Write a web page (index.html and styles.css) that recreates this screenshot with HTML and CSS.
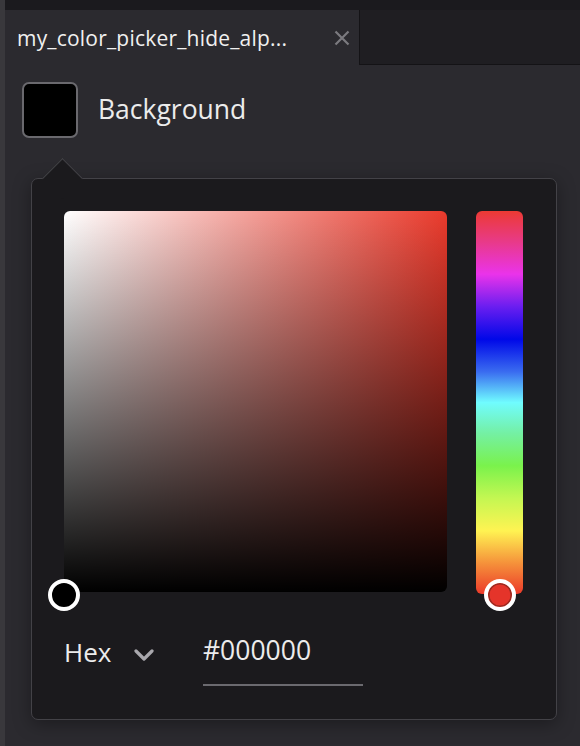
FILE: index.html
```html
<!DOCTYPE html>
<html lang="en">
<head>
	<meta charset="UTF-8">
	<title>Color picker</title>
	<link rel="stylesheet" href="styles.css">
</head>
<body>
	<div class="app">
		<div class="topStrip"></div>
		<div class="tabBar">
			<div class="tab">
				<span class="tabTitle">my_color_picker_hide_alp...</span>
				<svg class="tabClose" width="16" height="16" viewBox="0 0 16 16">
					<path d="M1.5 1.5 L14.5 14.5 M14.5 1.5 L1.5 14.5" stroke="#7b7a7f" stroke-width="2.2" fill="none"/>
				</svg>
			</div>
			<div class="tabRest"></div>
		</div>
		<div class="content">
			<div class="colorRow">
				<div class="swatch"></div>
				<span class="colorLabel">Background</span>
			</div>
			<div class="popover">
				<div class="pickerMain">
					<div class="satArea">
						<div class="satHandle"></div>
					</div>
					<div class="hueBar">
						<div class="hueHandle"></div>
					</div>
				</div>
				<div class="formatRow">
					<div class="formatSelect">
						<span class="formatName">Hex</span>
						<svg class="chevron" width="20" height="12" viewBox="0 0 20 12">
							<path d="M2 2 L10 10 L18 2" stroke="#a9a8ad" stroke-width="3.2" fill="none" stroke-linecap="round" stroke-linejoin="round"/>
						</svg>
					</div>
					<div class="hexField">#000000</div>
				</div>
			</div>
		</div>
	</div>
</body>
</html>
```

FILE: styles.css
```css
html, body {
  margin: 0;
  height: 100%;
}
body {
  background: #2b2a2f;
  font-family: "Open Sans", "Noto Sans", sans-serif;
  color: #ececec;
}
.app {
  min-height: 100%;
  border-left: 5px solid #39383c;
  box-sizing: border-box;
}
.topStrip {
  height: 10px;
  background: #1b1a1e;
}
.tabBar {
  display: flex;
  height: 55px;
}
.tab {
  width: 354px;
  display: flex;
  align-items: center;
  padding-left: 12px;
  box-sizing: border-box;
  background: #2b2a2f;
}
.tabTitle {
  font-size: 21px;
  color: #f0f0f0;
  letter-spacing: 0.2px;
  white-space: nowrap;
}
.tabClose {
  margin-left: 47px;
  flex-shrink: 0;
}
.tabRest {
  flex: 1;
  background: #1f1e22;
  border-left: 1px solid #141316;
  border-bottom: 1px solid #141316;
}
.content {
  padding: 17px 0 0 17px;
}
.colorRow {
  display: flex;
  align-items: center;
  gap: 20px;
}
.swatch {
  width: 56px;
  height: 56px;
  box-sizing: border-box;
  background: #000;
  border: 2px solid #6a696e;
  border-radius: 7px;
}
.colorLabel {
  font-size: 26.5px;
  color: #ececec;
  padding-bottom: 2px;
}
.popover {
  position: relative;
  margin: 40px 0 0 9px;
  width: 526px;
  height: 542px;
  box-sizing: border-box;
  padding: 32px 33px 0 32px;
  background: #1b1a1d;
  border: 1px solid #434247;
  border-radius: 7px;
  box-shadow: 0 4px 18px rgba(0, 0, 0, 0.35);
}
.popover:before {
  content: "";
  position: absolute;
  left: 16px;
  top: -15px;
  width: 28px;
  height: 28px;
  background: #1b1a1d;
  border-left: 1px solid #434247;
  border-top: 1px solid #434247;
  transform: rotate(45deg);
}
.pickerMain {
  display: flex;
  gap: 29px;
  align-items: flex-start;
}
.satArea {
  position: relative;
  width: 383px;
  height: 381px;
  border-radius: 6px;
  background:
    linear-gradient(to top, #000, rgba(0, 0, 0, 0)),
    linear-gradient(to right, #fff, #ea3a2c);
}
.satHandle {
  position: absolute;
  left: -16px;
  top: 368px;
  width: 32px;
  height: 32px;
  box-sizing: border-box;
  border-radius: 50%;
  border: 4px solid #fff;
  background: #000;
}
.hueBar {
  position: relative;
  width: 47px;
  height: 383px;
  border-radius: 6px;
  background: linear-gradient(to bottom,
    #ec3a33 0%,
    #e83a88 8%,
    #ea33ea 16.5%,
    #6a1ef0 25%,
    #0008e8 33.5%,
    #3a6cf0 42%,
    #70fcff 50%,
    #74f0a4 58%,
    #7af24c 66.5%,
    #c4f752 75%,
    #fff352 83.5%,
    #f5913a 92%,
    #ec3a2a 100%);
}
.hueHandle {
  position: absolute;
  left: 8px;
  top: 368px;
  width: 32px;
  height: 32px;
  box-sizing: border-box;
  border-radius: 50%;
  border: 4px solid #fff;
  background: #e5342a;
  box-shadow: inset 0 0 0 1.5px #9c2a20;
}
.formatRow {
  display: flex;
  align-items: flex-start;
  margin-top: 40px;
}
.formatSelect {
  display: flex;
  align-items: center;
  width: 139px;
}
.formatName {
  font-size: 26px;
  color: #ececec;
}
.chevron {
  margin-left: 23px;
  margin-top: 5px;
}
.hexField {
  width: 160px;
  font-size: 26.5px;
  color: #ececec;
  padding-bottom: 17px;
  border-bottom: 2px solid #6b6a6f;
  line-height: 34px;
  margin-top: -1px;
}
```
